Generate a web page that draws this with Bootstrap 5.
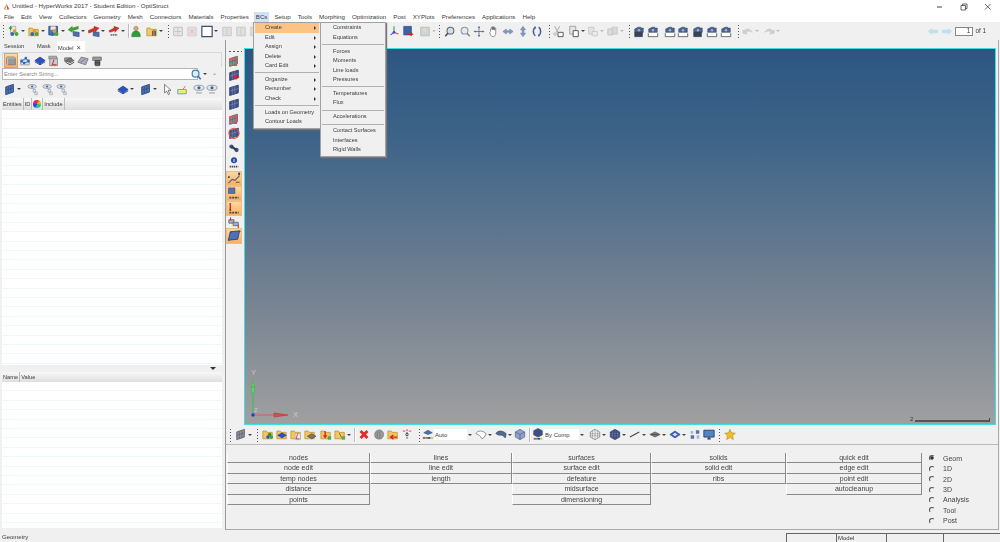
<!DOCTYPE html>
<html lang="en">
<head>
<meta charset="UTF-8">
<title>Untitled - HyperWorks 2017 - Student Edition - OptiStruct</title>
<link href="https://cdn.jsdelivr.net/npm/bootstrap@5.3.0/dist/css/bootstrap.min.css" rel="stylesheet">
<style>
  html, body { margin: 0; height: 542px; overflow: hidden; }
  body { font-family: "Liberation Sans", Arial, sans-serif; font-size: 6.3px; line-height: 1; color: #3a3a3a; background: #f0f0f0; }
  #app { width: 1000px; height: 542px; filter: blur(.3px); }

  /* title + menu */
  .ttlbar { height: 13px; background: #fff; font-size: 6.2px; padding-left: 3px; }
  .ttlbar .logo { width: 7px; height: 7px; margin-right: 2px; }
  .winbtn { width: 24px; text-align: center; }
  .winbtn svg { width: 8px; height: 8px; }
  .mnubar { height: 9px; background: #fff; gap: 7px; padding-left: 4px; font-size: 6.2px; }
  .mnubar span { white-space: nowrap; }
  .mnu-on { background: #cfe3f5; box-shadow: 0 0 0 2px #cfe3f5; }

  /* toolbars */
  .tbar1 { height: 18px; padding-left: 1px; }
  .ti { width: 12px; height: 13px; flex: none; overflow: visible; }
  .ca { width: 8px; flex: none; }
  .ca::before { content: ""; display: block; border: 2px solid transparent; border-top: 2.5px solid #444; border-bottom: 0; width: 0; margin-left: 1px; }
  .ca.c6 { width: 6px; }
  .ca.pale::before { border-top-color: #bbb; }
  .grp { width: 5px; height: 14px; flex: none; background: radial-gradient(circle, #555 .7px, transparent .9px) center top / 3px 3px repeat-y; }
  .sepv { width: 2px; height: 14px; flex: none; border-left: 1px solid #bbb; border-right: 1px solid #fff; }
  .l1 { margin-left: 1px; } .l2 { margin-left: 2px; } .l3 { margin-left: 3px; } .l4 { margin-left: 4px; } .l5 { margin-left: 5px; }
  .gap127 { margin-left: 127px; }
  .gap49 { margin-left: 49px; }
  .lneg8 { margin-left: -8px; }
  .pageinp { width: 18px; height: 9px; background: #fff; border: 1px solid #888; text-align: right; font-size: 6.5px; padding-right: 2px; margin-left: 2px; }
  .pageof { margin: 0 14px 0 2px; font-size: 6.3px; }

  /* left panel */
  .workrow { height: 490px; }
  .leftcol { width: 226px; flex: none; padding: 1px 0 0 2px; border-right: 1px solid #999; font-size: 5.7px; }
  .leftin { width: 220px; }
  .tabrow { height: 11px; }
  .tabcell { padding: 2.5px 0 0 2px; }
  .tabcell.t1 { width: 33px; } .tabcell.t2 { width: 22px; }
  .tabcell.on { width: 28px; background: #fff; padding-left: 1px; }
  .tabx { font-size: 7.5px; margin-left: 3px; }
  .iconrow { height: 15px; border: 1px solid #d9d9d9; border-bottom: 0; padding-left: 2px; gap: 2.4px; background: #f0f0f0; }
  .sel-org { background: linear-gradient(#ffd9a0, #fbb264); outline: 1px solid #e0a060; }
  .srch { height: 13px; padding-top: 1px; }
  .srchbox { width: 196px; height: 11.5px; border: 1px solid #b5b5b5; background: #fff; color: #8a8a8a; padding: 2.5px 0 0 1px; font-size: 5.7px; }
  .iconrow2 { height: 18px; padding-left: 2px; }
  .hdrrow { height: 12px; background: linear-gradient(#f8f8f8, #dedede); }
  .hdrrow span { padding: 0 1px; border-right: 1px solid #bbb; height: 12px; line-height: 12px; }
  .tblbody { background: repeating-linear-gradient(#fff 0, #fff 8.4px, #f0f7fa 8.4px, #f0f7fa 9.4px); }
  .tb-a { height: 255px; }
  .tb-b { height: 146px; }
  .splitr { height: 7px; }
  .splitr i { border: 3px solid transparent; border-top: 3.5px solid #333; border-bottom: 0; margin-right: 6px; }
  .hdr2 { height: 10px; }
  .hdr2 span { height: 10px; line-height: 10px; }
  .colorwheel { width: 8px; height: 8px; background: conic-gradient(#e22, #ec2, #2c3, #2bd, #23d, #c2c, #e22); margin: 2px 1px 0; }

  /* right */
  .rightcol { width: 773px; flex: none; border-right: 1px solid #aaa; }
  .viewrow { height: 385px; }
  .vtools { width: 18px; flex: none; padding-top: 10px; gap: 1.9px; }
  .grph { width: 14px; height: 3px; background: radial-gradient(circle, #555 .7px, transparent .9px) left center / 4px 3px repeat-x; }
  .vtools .ti { margin-left: 2px; width: 12px; height: 12.6px; }
  .vt-org { width: 14px; height: 13px; margin-left: 1px; background: linear-gradient(#ffd7a0, #f9b062); outline: 1px solid #e9c08c; flex: none; }
  .vt-org.first { margin-top: 1px; }
  .vt-org.last { height: 14px; margin-top: -2px; }
  .vt-org svg { width: 14px; height: 13px; display: block; }
  .viewport { width: 752px; margin-top: 7.5px; position: relative; border: 1px solid #3fdde6; background: linear-gradient(#2c5682, #3f6488 25%, #7d8793 72%, #a0a0a0); }
  .triad { position: absolute; left: 0; bottom: 0; width: 60px; height: 60px; }
  .scalebar { position: absolute; right: 5px; bottom: 2px; width: 80px; height: 4px; color: #333; font-size: 6px; }
  .scalebar b { flex: 1; height: 4px; border-bottom: 2px solid #555; border-right: 1px solid #444; margin-left: 2px; }

  .tbar2 { height: 20px; padding-left: 2px; border-bottom: 1px solid #bbb; }
  .cmbo { background: #fff; height: 11px; font-size: 6px; padding: 2.5px 0 0 1px; }
  .cmbo.w1 { width: 33px; } .cmbo.w2 { width: 35px; }

  .pagepanel { height: 85px; padding: 8px 0 0 1px; border-bottom: 1px solid #aaa; font-size: 7px; color: #444; }
  .pcol { flex: none; }
  .pc1 { width: 143px; } .pc2 { width: 142px; } .pc3 { width: 139px; } .pc4 { width: 135px; } .pc5 { width: 136px; }
  .btn.pbtn { display: block; width: 100%; height: 10.4px; padding: 0; border-radius: 0; border: 0; border-right: 1px solid #8a8a8a; border-bottom: 1px solid #8a8a8a; border-left: 1px solid #fff; background: #f0f0f0; font-size: 7px; line-height: 9.4px; color: #444; font-family: inherit; }
  .radios { padding-left: 7px; gap: 0; }
  .rdorow { height: 10.45px; gap: 8px; }
  .rdo { appearance: none; width: 6px; height: 6px; margin: 0; border-radius: 50%; border: 1px solid; border-color: #555 #eee #eee #555; background: #f0f0f0; }
  .rdo:checked { background: radial-gradient(circle, #333 1.5px, transparent 1.8px); }

  .statusbar { height: 12px; font-size: 6px; padding-left: 2px; }
  .stcell { height: 9px; margin-top: 3px; border-top: 1px solid #666; border-left: 1px solid #666; padding: 1px 0 0 1px; }
  .sw1 { width: 50px; } .sw2 { width: 50px; } .sw3 { width: 57px; } .sw4 { width: 57px; }

  /* BCs menus */
  .hwmenu { position: absolute; top: 22px; z-index: 5; background: #f0f0f0; border: 1px solid #a0a0a0; box-shadow: 1px 1px 1px #777; padding: .4px 1px; }
  .hwmenu.m-a { left: 253px; width: 68px; height: 107px; }
  .hwmenu.m-b { left: 320px; width: 66px; height: 135px; z-index: 6; }
  .hwitem { height: 9.4px; line-height: 9.4px; padding-left: 10px; position: relative; font-size: 5.6px; white-space: nowrap; }
  .m-b .hwitem { padding-left: 11px; }
  .hwitem.on { background: #fbc384; }
  .hwitem.sub::after { content: ""; position: absolute; right: 3px; top: 3px; border: 2px solid transparent; border-left: 2.5px solid #333; border-right: 0; }
  .hwsep { height: 4.6px; padding-top: 2px; }
  .hwsep::before { content: ""; display: block; border-top: 1px solid #b0b0b0; }
</style>
</head>
<body>
<!-- icon sheet -->
<svg width="0" height="0" class="position-absolute">
  <defs>
    <symbol id="plate" viewBox="0 0 14 14"><path d="M2 4 11 1v9l-9 3z" fill="#4f74b8" stroke="#2b4378"/><path d="M5 3v9M8 2v9M2 8l9-3" stroke="#27396a" stroke-width=".6"/></symbol>
    <symbol id="plateg" viewBox="0 0 14 14"><path d="M2 4 11 1v9l-9 3z" fill="#8b8fa3" stroke="#666"/><path d="M5 3v9M8 2v9M2 8l9-3" stroke="#555" stroke-width=".6"/></symbol>
    <symbol id="plated" viewBox="0 0 14 14"><path d="M2 4 12 1v9L2 13z" fill="#3d4f92" stroke="#2a3670"/><path d="M5 3v9M8 2v9M2 8l10-3" stroke="#9aa" stroke-width=".5"/></symbol>
    <symbol id="folder" viewBox="0 0 14 14"><path d="M1 3h4l1 1.500h6V12H1z" fill="#f4c65f" stroke="#b98a2a" stroke-width=".8"/></symbol>
    <symbol id="balls" viewBox="0 0 14 14"><circle cx="5" cy="10" r="2.300" fill="#2d6bc4"/><circle cx="10" cy="10" r="2.300" fill="#46a83c"/><circle cx="7.500" cy="6.500" r="2.200" fill="#e29a2e"/></symbol>
    <symbol id="diam" viewBox="0 0 14 14"><path d="M1 7 7 3l6 4-6 4z" fill="#2a52c8" stroke="#1a307c" stroke-width=".7"/><path d="M1 8.500 7 12l6-3.500" fill="none" stroke="#1a307c"/></symbol>
    <symbol id="new" viewBox="0 0 14 14"><path d="M3 1h6v8H3z" fill="#eee" stroke="#888" stroke-width=".7"/><path d="M1 3h4M3 1v4" stroke="#2a9a2a" stroke-width="1.400"/><use href="#balls"/></symbol>
    <symbol id="open" viewBox="0 0 14 14"><use href="#folder"/><use href="#balls"/></symbol>
    <symbol id="save" viewBox="0 0 14 14"><path d="M1 1h10v10H1z" fill="#5a76b0" stroke="#2d4272"/><path d="M3 1h6v4H3z" fill="#e8e8e8"/><use href="#balls"/></symbol>
    <symbol id="imp" viewBox="0 0 14 14"><path d="M6 7 13 8v5L6 12z" fill="#4f6db0" stroke="#2b4378" stroke-width=".6"/><path d="M12 1 5 3V1L0 5l5 3V6l7-2z" fill="#3fa52f" stroke="#27701e" stroke-width=".4"/></symbol>
    <symbol id="exp" viewBox="0 0 14 14"><path d="M6 7 13 8v5L6 12z" fill="#4f6db0" stroke="#2b4378" stroke-width=".6"/><path d="M0 6 7 3V1l6 2-5 5V6L1 9z" fill="#d4302a" stroke="#8c1c18" stroke-width=".4"/></symbol>
    <symbol id="ppt" viewBox="0 0 14 14"><path d="M1 6 7 3V1l6 2-5 5V6L2 8z" fill="#d4302a" stroke="#8c1c18" stroke-width=".4"/><path d="M3 11h8" stroke="#777" stroke-width="2" stroke-dasharray="2 .6"/></symbol>
    <symbol id="person" viewBox="0 0 14 14"><circle cx="7" cy="3.500" r="2.500" fill="#d9a878" stroke="#7a5a3a" stroke-width=".5"/><path d="M2 13c0-5 2-6.500 5-6.500s5 1.500 5 6.500z" fill="#2f9e3a" stroke="#1c6824" stroke-width=".5"/></symbol>
    <symbol id="foldc" viewBox="0 0 14 14"><use href="#folder"/><path d="M7 12V6h1.500v6z" fill="#d33"/><path d="M8.500 12V5H10v7z" fill="#3a3"/><path d="M10 12V6h1.500v6z" fill="#33c"/><path d="M11.500 12V7H13v5z" fill="#cc3"/></symbol>
    <symbol id="ghost1" viewBox="0 0 14 14"><path d="M2 2h10v10H2z" fill="#e6e6e6" stroke="#bbb"/><path d="M7 3v8M3 7h8" stroke="#c4c4c4"/></symbol>
    <symbol id="ghost2" viewBox="0 0 14 14"><path d="M2 2h10v10H2z" fill="#e8e0e0" stroke="#ccc"/><path d="M4 4l6 6M10 4l-6 6" stroke="#d8b0b0"/></symbol>
    <symbol id="whitebox" viewBox="0 0 14 14"><path d="M1 1h12v12H1z" fill="#fff" stroke="#3f4f6a" stroke-width="1.400"/></symbol>
    <symbol id="ghost3" viewBox="0 0 14 14"><path d="M2 2h10v10H2z" fill="#dfdfdf" stroke="#c6c6c6"/><path d="M7 2v10" stroke="#c8c8c8"/></symbol>
    <symbol id="xyz" viewBox="0 0 14 14"><path d="M7 8V1" stroke="#2a9a3a" stroke-width="1.200"/><path d="M7 8l5 2" stroke="#d33" stroke-width="1.200"/><path d="M7 8l-4 3" stroke="#2b4bd0" stroke-width="1.200"/><circle cx="7" cy="8" r="1.500" fill="#2b4bd0"/></symbol>
    <symbol id="vbook" viewBox="0 0 14 14"><path d="M2 1h9v10H2z" fill="#3c62a8" stroke="#24406f" stroke-width=".7"/><path d="M6 10h6l-2-2m2 2-2 2" stroke="#d52020" stroke-width="1.400" fill="none"/></symbol>
    <symbol id="ghperson" viewBox="0 0 14 14"><path d="M2 2h10v10H2z" fill="#cfd6cf" stroke="#bbb"/><circle cx="7" cy="5.500" r="2.200" fill="#e6d5c4"/></symbol>
    <symbol id="zoomf" viewBox="0 0 14 14"><circle cx="7.500" cy="6" r="4" fill="#d7dde4" stroke="#5d6774" stroke-width="1.200"/><path d="M4.500 9 1.500 12.500" stroke="#3d4754" stroke-width="1.600"/></symbol>
    <symbol id="zoomg" viewBox="0 0 14 14"><circle cx="6.500" cy="6" r="4" fill="#e5e8ec" stroke="#8c96a2" stroke-width="1.200"/><path d="M9.500 9 12.500 12.500" stroke="#79838f" stroke-width="1.600"/></symbol>
    <symbol id="zoomb" viewBox="0 0 14 14"><circle cx="6.500" cy="6" r="4" fill="#dcecf8" stroke="#3f7fb8" stroke-width="1.400"/><path d="M9.500 9 12.500 12.500" stroke="#4a6a8a" stroke-width="1.800"/></symbol>
    <symbol id="pan" viewBox="0 0 14 14"><path d="M7 1v12M1 7h12" stroke="#5b6d84" stroke-width="1"/><path d="M7 1 5.500 3h3zM7 13l-1.500-2h3zM1 7l2-1.500v3zM13 7l-2-1.500v3z" fill="#5b6d84"/></symbol>
    <symbol id="hand" viewBox="0 0 14 14"><path d="M3 7V4l1 .2V2h1.200v3-3.500h1.300V5V2h1.200v3.500V3h1.300v6c0 2.500-1.500 4-3.500 4S3 11 2 8.500z" fill="#fff" stroke="#555" stroke-width=".7"/></symbol>
    <symbol id="lr" viewBox="0 0 14 14"><path d="M1 7l4-3v2h4V4l4 3-4 3V8H5v2z" fill="#8296c2" stroke="#5a6c96" stroke-width=".5"/></symbol>
    <symbol id="ud" viewBox="0 0 14 14"><path d="M7 1l3 4H8v4h2l-3 4-3-4h2V5H4z" fill="#8296c2" stroke="#5a6c96" stroke-width=".5"/></symbol>
    <symbol id="spin" viewBox="0 0 14 14"><path d="M5 2C2 4 2 10 5 12M9 2c3 2 3 8 0 10" fill="none" stroke="#44608f" stroke-width="1.800"/><path d="M5 1v3M9 10v3" stroke="#44608f"/></symbol>
    <symbol id="cut" viewBox="0 0 14 14"><path d="M3 1l4 7M9 1 5 8" stroke="#b0b0b0" stroke-width="1.200"/><circle cx="3.500" cy="10" r="1.500" fill="none" stroke="#b0b0b0"/><path d="M7 8h6v5H7z" fill="#fff" stroke="#444"/></symbol>
    <symbol id="paste" viewBox="0 0 14 14"><path d="M2 1h7v9H2z" fill="#e6e6e6" stroke="#999"/><path d="M6 6h6v7H6z" fill="#fff" stroke="#444"/></symbol>
    <symbol id="ghdoc" viewBox="0 0 14 14"><path d="M2 2h6v8H2z" fill="#e4e4e4" stroke="#c3c3c3"/><path d="M6 7h6v5H6z" fill="#ececec" stroke="#c3c3c3"/></symbol>
    <symbol id="ghdoc2" viewBox="0 0 14 14"><path d="M1 4h6v7H1z" fill="#ddd" stroke="#bfbfbf"/><path d="M6 2h6v8H6z" fill="#d8d8d8" stroke="#c6c6c6"/></symbol>
    <symbol id="cam" viewBox="0 0 14 14"><path d="M2 4l4-2h3v1h3v5H2z" fill="#4c658f" stroke="#2d4064" stroke-width=".6"/><circle cx="7" cy="5.500" r="1.400" fill="#9fb4d4"/><path d="M1.500 9v4h11V9" fill="#fff" stroke="#333" stroke-width=".8"/></symbol>
    <symbol id="camf" viewBox="0 0 14 14"><path d="M2 4l4-2h3v1h3v5H2z" fill="#4c658f" stroke="#2d4064" stroke-width=".6"/><circle cx="7" cy="5.500" r="1.400" fill="#9fb4d4"/><path d="M2 8h9v5H2z" fill="#34445e" stroke="#222" stroke-width=".6"/></symbol>
    <symbol id="undo" viewBox="0 0 14 14"><path d="M2 7c2-4 7-4 10 1-3-2-5-2-7 0l1 2-5-1 0-4z" fill="#cfcfcf" stroke="#bdbdbd" stroke-width=".5"/></symbol>
    <symbol id="redo" viewBox="0 0 14 14"><path d="M12 7C10 3 5 3 2 8c3-2 5-2 7 0l-1 2 5-1 0-4z" fill="#cfcfcf" stroke="#bdbdbd" stroke-width=".5"/></symbol>
    <symbol id="back" viewBox="0 0 14 14"><path d="M1 7l5-4v2h7v4H6v2z" fill="#bfe0ee"/></symbol>
    <symbol id="fwd" viewBox="0 0 14 14"><path d="M13 7 8 3v2H1v4h7v2z" fill="#bfe0ee"/></symbol>
    <symbol id="net" viewBox="0 0 14 14"><path d="M2 6h10v6H2z" fill="#ddd" stroke="#999"/><path d="M3 8 8 4l3 4-5 2z" fill="none" stroke="#2b66c4"/><circle cx="3" cy="8" r="1.500" fill="#2b66c4"/><circle cx="8" cy="4" r="1.500" fill="#2b66c4"/><circle cx="11" cy="8" r="1.500" fill="#2b66c4"/><circle cx="6" cy="10" r="1.500" fill="#2b66c4"/></symbol>
    <symbol id="loadc" viewBox="0 0 14 14"><path d="M2 4h9v9H2z" fill="#ccc" stroke="#888"/><path d="M1 2h9v3H1z" fill="#aaa" stroke="#888"/><path d="M7 6l-2 6h5" fill="none" stroke="#c33" stroke-width="1.200"/></symbol>
    <symbol id="printr" viewBox="0 0 14 14"><path d="M2 4h8v4H2z" fill="#aaa" stroke="#666"/><path d="M3 7l5-3 5 3-5 3z" fill="#777" stroke="#444" stroke-width=".6"/><path d="M3 9l5 3 5-3" stroke="#333" fill="none"/></symbol>
    <symbol id="surf" viewBox="0 0 14 14"><path d="M1 9 5 3l8 2-3 7z" fill="#a8adc4" stroke="#777"/><path d="M4 9l6-4" stroke="#777"/></symbol>
    <symbol id="stack" viewBox="0 0 14 14"><path d="M2 3h10v4H2z" fill="#999" stroke="#777"/><path d="M5 7h5v6H5z" fill="#777" stroke="#444"/><path d="M4 9h7M4 11h7" stroke="#333"/></symbol>
    <symbol id="eyep" viewBox="0 0 14 14"><ellipse cx="6" cy="3.500" rx="5" ry="2.300" fill="#dbe3ee" stroke="#6b7c94" stroke-width=".7"/><circle cx="6" cy="3.500" r="1.300" fill="#4a607e"/><path d="M7 7h3v3H7zM9 10h3v3H9z" fill="#e6e9ef" stroke="#7e8b9c" stroke-width=".6"/></symbol>
    <symbol id="cursr" viewBox="0 0 14 14"><path d="M3 1v10l2.500-2 2 4 1.500-1-2-4h3.500z" fill="#fff" stroke="#333" stroke-width=".7"/></symbol>
    <symbol id="ybox" viewBox="0 0 14 14"><path d="M2 7h10v5H2z" fill="#ecec70" stroke="#4ca5c4"/><path d="M8 7l3-4" stroke="#d0602a"/></symbol>
    <symbol id="eye" viewBox="0 0 14 14"><ellipse cx="7" cy="5" rx="6" ry="3" fill="#e1e7ef" stroke="#6b7c94" stroke-width=".8"/><circle cx="7" cy="5" r="1.800" fill="#4a607e"/><path d="M4 11h6" stroke="#555" stroke-dasharray="1.500 .8"/></symbol>
    <symbol id="redp" viewBox="0 0 14 14"><use href="#plateg"/><path d="M2 4h8v8H2z" fill="none" stroke="#e2553f" stroke-width="1.200"/></symbol>
    <symbol id="redarr" viewBox="0 0 14 14"><use href="#plated"/><path d="M13 9H8m2-2.500L7 9l3 2.500" fill="none" stroke="#d22" stroke-width="1.800"/></symbol>
    <symbol id="nocirc" viewBox="0 0 14 14"><use href="#plated"/><circle cx="7" cy="7" r="6" fill="none" stroke="#e2553f" stroke-width="1.200"/></symbol>
    <symbol id="binoc" viewBox="0 0 14 14"><circle cx="4" cy="5" r="2.500" fill="#42587e"/><circle cx="10" cy="9" r="2.500" fill="#42587e"/><path d="M4 5l6 4" stroke="#2d3b58" stroke-width="2.500"/></symbol>
    <symbol id="info" viewBox="0 0 14 14"><circle cx="7" cy="4.500" r="3.500" fill="#2947a8"/><path d="M7 3.200v3.600" stroke="#fff"/><path d="M2 12h10" stroke="#444" stroke-width="2" stroke-dasharray="1.600 .8"/></symbol>
    <symbol id="chart" viewBox="0 0 14 14"><path d="M1 12l4-4 3 1 5-5" fill="none" stroke="#565b72" stroke-width="1.200"/><path d="M1 5h1v1H1zM12 1h1v2h-1zM9 11h4" stroke="#444"/></symbol>
    <symbol id="abc1" viewBox="0 0 14 14"><path d="M1 1h7v6H1z" fill="#5870a8" stroke="#354877" stroke-width=".6"/><path d="M2 11.500h10" stroke="#4a4a4a" stroke-width="2" stroke-dasharray="2.200 .8"/></symbol>
    <symbol id="abc2" viewBox="0 0 14 14"><path d="M3 1v7" stroke="#c22" stroke-width="1.400"/><circle cx="3" cy="8.500" r="1" fill="#333"/><path d="M2 11.500h10" stroke="#4a4a4a" stroke-width="2" stroke-dasharray="2.200 .8"/></symbol>
    <symbol id="rearr" viewBox="0 0 14 14"><path d="M1 4h6v4H1z" fill="#a6add0" stroke="#667"/><path d="M6 7h6v4H6z" fill="#a6add0" stroke="#667"/><path d="M3 1v4M12 10v4" stroke="#d22" stroke-width="1.200"/></symbol>
    <symbol id="surfo" viewBox="0 0 14 14"><path d="M1 12 3 3l10-1-2 9z" fill="#4c71b6" stroke="#2c4678"/><path d="M1 12h1v1H1zM3 3h1v1H3zM13 2h1v1h-1z" fill="#333"/></symbol>
    <symbol id="fballs" viewBox="0 0 14 14"><use href="#folder"/><circle cx="7" cy="10" r="2" fill="#2b4bd0"/><circle cx="11" cy="10" r="2" fill="#3a3"/><circle cx="9" cy="7" r="2" fill="#2d8a3a"/></symbol>
    <symbol id="fdiam" viewBox="0 0 14 14"><use href="#folder"/><path d="M2 8l5-3 5 3-5 3z" fill="#2a52c8" stroke="#1a307c" stroke-width=".6"/></symbol>
    <symbol id="fload" viewBox="0 0 14 14"><use href="#folder"/><path d="M6 6h6v7H6z" fill="#eee" stroke="#999" stroke-width=".6"/><path d="M9 6l-2 6h4" fill="none" stroke="#c33"/></symbol>
    <symbol id="fprint" viewBox="0 0 14 14"><use href="#folder"/><path d="M4 9l5-3 5 3-5 3z" fill="#777" stroke="#333" stroke-width=".6"/></symbol>
    <symbol id="fdown" viewBox="0 0 14 14"><use href="#folder"/><path d="M6 3v6" stroke="#d22" stroke-width="1.600"/><path d="M3.500 8h5L6 12z" fill="#d22"/><path d="M9 9h4v4H9z" fill="#4a4"/></symbol>
    <symbol id="fnode" viewBox="0 0 14 14"><use href="#folder"/><path d="M6 5l3 6" stroke="#666"/><path d="M9 9h4v4H9z" fill="#6a4"/></symbol>
    <symbol id="redx" viewBox="0 0 14 14"><path d="M3 3l8 8M11 3l-8 8" stroke="#df2a2a" stroke-width="3.400"/></symbol>
    <symbol id="blob" viewBox="0 0 14 14"><path d="M2 7c0-4 4-6 7-5s4 4 3 7-4 4-7 3-3-3-3-5z" fill="#9a9a9a" stroke="#666" stroke-width=".7"/><path d="M5 4v7M8 3v8" stroke="#666" stroke-width=".6"/></symbol>
    <symbol id="farr" viewBox="0 0 14 14"><use href="#folder"/><path d="M12 10H5m2.500-2.500L4 10l3.500 2.500" fill="none" stroke="#d22" stroke-width="1.500"/></symbol>
    <symbol id="tree" viewBox="0 0 14 14"><path d="M7 1v12" stroke="#444" stroke-dasharray="2 1"/><path d="M5 3H2M9 3h3" stroke="#d33"/><circle cx="7" cy="7" r="1.500" fill="none" stroke="#444"/></symbol>
    <symbol id="paint" viewBox="0 0 14 14"><path d="M2 5l5-3 5 3-5 2z" fill="#4f6f9f" stroke="#2b4378" stroke-width=".6"/><path d="M1 10h3v2H1z" fill="#d33"/><path d="M4 10h3v2H4z" fill="#3a3"/><path d="M7 10h3v2H7z" fill="#33c"/><path d="M10 10h3v2h-3z" fill="#cc3"/></symbol>
    <symbol id="cloud" viewBox="0 0 14 14"><path d="M1 6c2-4 8-4 12 0l-2 4-3 2c-1-3-4-5-7-6z" fill="#fff" stroke="#666" stroke-width=".8"/></symbol>
    <symbol id="cloudb" viewBox="0 0 14 14"><path d="M1 6c2-4 8-4 12 0l-1 5c-2-3-5-4-7-3z" fill="#55688d" stroke="#34456a" stroke-width=".8"/></symbol>
    <symbol id="bcube" viewBox="0 0 14 14"><path d="M7 1l5.500 3v6L7 13l-5.500-3V4z" fill="#8fa2cc" stroke="#45567e" stroke-width=".7"/><path d="M1.500 4 7 7l5.500-3M7 7v6" stroke="#45567e" stroke-width=".7" fill="none"/></symbol>
    <symbol id="ccube" viewBox="0 0 14 14"><path d="M7 0l5 2.500v5L7 10 2 7.500v-5z" fill="#3e5082" stroke="#26335a" stroke-width=".6"/><path d="M2 11h2.500v2H2z" fill="#d33"/><path d="M4.500 11H7v2H4.500z" fill="#3a3"/><path d="M7 11h2.500v2H7z" fill="#33c"/><path d="M9.500 11H12v2H9.500z" fill="#cc3"/></symbol>
    <symbol id="wire" viewBox="0 0 14 14"><path d="M7 1l5.500 3v6L7 13l-5.500-3V4z" fill="#eee" stroke="#666" stroke-width=".7"/><path d="M4 2.500v9M7 1v12M10 2.500v9M1.500 6h11M1.500 8.500h11" stroke="#777" stroke-width=".5"/></symbol>
    <symbol id="mesh3" viewBox="0 0 14 14"><path d="M7 1l5.500 3v6L7 13l-5.500-3V4z" fill="#39487c" stroke="#232e58" stroke-width=".7"/><path d="M4 2.500v9M7 1v12M10 2.500v9M1.500 6h11M1.500 8.500h11" stroke="#8f9ac0" stroke-width=".4"/></symbol>
    <symbol id="line1" viewBox="0 0 14 14"><path d="M1 10 12 4" stroke="#444" stroke-width="1.200"/></symbol>
    <symbol id="gdiam" viewBox="0 0 14 14"><path d="M1 7l6-3 6 3-6 3z" fill="#777" stroke="#444" stroke-width=".7"/><path d="M3 7h8" stroke="#333" stroke-width=".6"/></symbol>
    <symbol id="wdiam" viewBox="0 0 14 14"><path d="M1 7l6-4 6 4-6 4z" fill="#3a63c6" stroke="#22357c" stroke-width=".7"/><path d="M4 7l3-2 3 2-3 2z" fill="#dde"/></symbol>
    <symbol id="squares" viewBox="0 0 14 14"><path d="M8 2h4v4H8zM2 8h4v4H2z" fill="#5872a8"/><path d="M2 3h3v3H2zM9 8h3v4H9z" fill="#a8b4d0"/></symbol>
    <symbol id="monitor" viewBox="0 0 14 14"><path d="M1 2h12v8H1z" fill="#4a86c8" stroke="#335"/><path d="M5 12h4M7 10v2" stroke="#335" stroke-width="1.400"/></symbol>
    <symbol id="star" viewBox="0 0 14 14"><path d="M7 1l1.900 4 4.300.5-3.200 3 .9 4.300L7 10.600l-3.900 2.200.9-4.300-3.200-3L5.100 5z" fill="#f0c020" stroke="#a57d10" stroke-width=".6"/></symbol>
    <symbol id="gcube" viewBox="0 0 14 14"><path d="M2 3h9l1 1v8H3l-1-1z" fill="#9a9a9a" stroke="#777"/><path d="M2 3l1 1h9M3 4v8" stroke="#ccc" fill="none"/></symbol>
  </defs>
</svg>

<div id="app" class="d-flex flex-column">
  <!-- title -->
  <div class="ttlbar d-flex align-items-center">
    <svg class="logo" viewBox="0 0 10 10"><path d="M5 1 1 9h2l2-4z" fill="#e8a040"/><path d="M5 1l4 8H6z" fill="#d24a3a"/><path d="M2 9h7" stroke="#aaa"/></svg>
    <span>Untitled - HyperWorks 2017 - Student Edition - OptiStruct</span>
    <div class="ms-auto d-flex align-items-center">
      <span class="winbtn"><svg viewBox="0 0 8 8"><path d="M1 4h5" stroke="#444"/></svg></span>
      <span class="winbtn"><svg viewBox="0 0 8 8"><path d="M1 2.500h4.500V7H1zM2.500 2.500V1H7v4.500H5.500" fill="none" stroke="#444" stroke-width=".8"/></svg></span>
      <span class="winbtn"><svg viewBox="0 0 8 8"><path d="M1 1l5.500 5.500M6.500 1 1 6.500" stroke="#444" stroke-width=".8"/></svg></span>
    </div>
  </div>

  <!-- menu bar -->
  <div class="mnubar d-flex align-items-center">
    <span>File</span><span>Edit</span><span>View</span><span>Collectors</span><span>Geometry</span><span>Mesh</span><span>Connectors</span><span>Materials</span><span>Properties</span><span class="mnu-on">BCs</span><span>Setup</span><span>Tools</span><span>Morphing</span><span>Optimization</span><span>Post</span><span>XYPlots</span><span>Preferences</span><span>Applications</span><span>Help</span>
  </div>

  <!-- main toolbar -->
  <div class="tbar1 d-flex align-items-center">
    <i class="grp"></i>
    <svg class="ti l2"><use href="#new"/></svg><i class="ca"></i>
    <svg class="ti"><use href="#open"/></svg><i class="ca"></i>
    <svg class="ti"><use href="#save"/></svg><i class="ca"></i>
    <svg class="ti"><use href="#imp"/></svg><i class="ca"></i>
    <svg class="ti"><use href="#exp"/></svg><i class="ca"></i>
    <svg class="ti"><use href="#ppt"/></svg><i class="ca"></i>
    <i class="sepv"></i>
    <svg class="ti"><use href="#person"/></svg>
    <svg class="ti l4"><use href="#foldc"/></svg><i class="ca"></i>
    <i class="grp"></i>
    <svg class="ti l1"><use href="#ghost1"/></svg>
    <svg class="ti l2"><use href="#ghost2"/></svg>
    <svg class="ti l3"><use href="#whitebox"/></svg><i class="ca"></i>
    <svg class="ti"><use href="#ghost3"/></svg>
    <svg class="ti l2"><use href="#ghost3"/></svg>
    <svg class="ti l2"><use href="#ghost3"/></svg>
    <svg class="ti gap127"><use href="#xyz"/></svg>
    <svg class="ti l2"><use href="#vbook"/></svg>
    <svg class="ti l5"><use href="#ghperson"/></svg><i class="ca c6 pale"></i>
    <i class="grp"></i>
    <svg class="ti l2"><use href="#zoomf"/></svg>
    <svg class="ti l3"><use href="#zoomg"/></svg>
    <svg class="ti l2"><use href="#pan"/></svg>
    <svg class="ti l3"><use href="#hand"/></svg>
    <svg class="ti l2"><use href="#lr"/></svg>
    <svg class="ti l3"><use href="#ud"/></svg>
    <svg class="ti l2"><use href="#spin"/></svg>
    <i class="grp l4"></i>
    <svg class="ti"><use href="#cut"/></svg>
    <svg class="ti l4"><use href="#paste"/></svg><i class="ca c6"></i>
    <svg class="ti l1"><use href="#ghdoc"/></svg><i class="ca c6 pale"></i>
    <svg class="ti l2"><use href="#ghdoc2"/></svg><i class="ca c6 pale"></i>
    <i class="grp l2"></i>
    <svg class="ti l1"><use href="#camf"/></svg>
    <svg class="ti l2"><use href="#cam"/></svg>
    <svg class="ti l5"><use href="#cam"/></svg>
    <svg class="ti l1"><use href="#cam"/></svg>
    <svg class="ti l3"><use href="#camf"/></svg>
    <svg class="ti l2"><use href="#cam"/></svg>
    <svg class="ti l2"><use href="#cam"/></svg>
    <i class="grp l4"></i>
    <svg class="ti l1"><use href="#undo"/></svg><i class="ca c6 pale"></i>
    <svg class="ti l3"><use href="#redo"/></svg><i class="ca c6 pale"></i>
    <svg class="ti ms-auto"><use href="#back"/></svg>
    <svg class="ti l2"><use href="#fwd"/></svg>
    <div class="pageinp">1</div><div class="pageof">of 1</div>
  </div>

  <div class="workrow d-flex">
    <!-- left panel -->
    <div class="leftcol">
      <div class="leftin d-flex flex-column">
        <div class="tabrow d-flex">
          <div class="tabcell t1">Session</div><div class="tabcell t2">Mask</div>
          <div class="tabcell on">Model<span class="tabx">×</span></div>
        </div>
        <div class="iconrow d-flex align-items-center">
          <svg class="ti sel-org"><use href="#gcube"/></svg>
          <svg class="ti"><use href="#net"/></svg>
          <svg class="ti"><use href="#diam"/></svg>
          <svg class="ti"><use href="#loadc"/></svg>
          <svg class="ti"><use href="#printr"/></svg>
          <svg class="ti"><use href="#surf"/></svg>
          <svg class="ti"><use href="#stack"/></svg>
        </div>
        <div class="srch d-flex align-items-center">
          <div class="srchbox">Enter Search String...</div>
          <svg class="ti lneg8"><use href="#zoomb"/></svg><i class="ca c6"></i>
          <span class="ms-1 text-secondary">⌄</span>
        </div>
        <div class="iconrow2 d-flex align-items-center">
          <svg class="ti"><use href="#plate"/></svg><i class="ca"></i>
          <svg class="ti l3"><use href="#eyep"/></svg>
          <svg class="ti l3"><use href="#eyep"/></svg>
          <svg class="ti l2"><use href="#eyep"/></svg>
          <svg class="ti gap49"><use href="#diam"/></svg><i class="ca"></i>
          <svg class="ti l3"><use href="#plate"/></svg><i class="ca"></i>
          <svg class="ti l2"><use href="#cursr"/></svg>
          <svg class="ti l2"><use href="#ybox"/></svg>
          <svg class="ti l5"><use href="#eye"/></svg>
          <svg class="ti l1"><use href="#eye"/></svg>
        </div>
        <div class="hdrrow d-flex">
          <span>Entities</span><span>ID</span><span class="d-flex p-0"><i class="colorwheel rounded-circle"></i></span><span>Include</span>
        </div>
        <div class="tblbody tb-a"></div>
        <div class="splitr d-flex justify-content-end align-items-center"><i></i></div>
        <div class="hdrrow hdr2 d-flex"><span>Name</span><span class="border-0">Value</span></div>
        <div class="tblbody tb-b"></div>
      </div>
    </div>

    <!-- right side -->
    <div class="rightcol d-flex flex-column">
      <div class="viewrow d-flex">
        <div class="vtools d-flex flex-column">
          <i class="grph l2"></i>
          <svg class="ti"><use href="#redp"/></svg>
          <svg class="ti"><use href="#redarr"/></svg>
          <svg class="ti"><use href="#plated"/></svg>
          <svg class="ti"><use href="#plated"/></svg>
          <svg class="ti"><use href="#redp"/></svg>
          <svg class="ti"><use href="#nocirc"/></svg>
          <svg class="ti"><use href="#binoc"/></svg>
          <svg class="ti"><use href="#info"/></svg>
          <div class="vt-org first"><svg><use href="#chart"/></svg></div>
          <div class="vt-org"><svg><use href="#abc1"/></svg></div>
          <div class="vt-org"><svg><use href="#abc2"/></svg></div>
          <svg class="ti"><use href="#rearr"/></svg>
          <div class="vt-org last"><svg><use href="#surfo"/></svg></div>
        </div>
        <div class="viewport">
          <svg class="triad" viewBox="0 0 60 60">
            <text x="6" y="11" font-size="7.500" fill="#c4c8cc" font-family="Liberation Sans">Y</text>
            <path d="M8 51V20" stroke="#2ec24a"/><path d="M6.500 29h3v-6h-3zM8 17l-2 6h4z" fill="#7fbf7f" stroke="#2ec24a" stroke-width=".7"/>
            <path d="M8 51h30" stroke="#d85a5a"/><path d="M29 49v4l14-2z" fill="#b85a5a" stroke="#c33" stroke-width=".7"/>
            <circle cx="8" cy="51" r="1.800" fill="#2a3ce0"/>
            <text x="9" y="48" font-size="6" fill="#c8c8c8" font-family="Liberation Sans">Z</text>
            <text x="48" y="53" font-size="7.500" fill="#c8ccd0" font-family="Liberation Sans">X</text>
          </svg>
          <div class="scalebar d-flex align-items-end"><span>2</span><b></b></div>
        </div>
      </div>

      <!-- bottom toolbar -->
      <div class="tbar2 d-flex align-items-center">
        <i class="grp"></i>
        <svg class="ti l2"><use href="#plateg"/></svg><i class="ca"></i>
        <i class="grp"></i>
        <svg class="ti l2"><use href="#fballs"/></svg>
        <svg class="ti l2"><use href="#fdiam"/></svg>
        <svg class="ti l2"><use href="#fload"/></svg>
        <svg class="ti l2"><use href="#fprint"/></svg>
        <svg class="ti l4"><use href="#fdown"/></svg>
        <svg class="ti l2"><use href="#fnode"/></svg><i class="ca c6"></i>
        <i class="sepv l2"></i>
        <svg class="ti l2"><use href="#redx"/></svg>
        <svg class="ti l3"><use href="#blob"/></svg>
        <svg class="ti l2"><use href="#farr"/></svg>
        <svg class="ti l2"><use href="#tree"/></svg>
        <i class="grp l4"></i>
        <svg class="ti"><use href="#paint"/></svg>
        <div class="cmbo w1">Auto</div>
        <i class="ca c6"></i>
        <svg class="ti l2"><use href="#cloud"/></svg><i class="ca c6"></i>
        <svg class="ti l2"><use href="#cloudb"/></svg><i class="ca c6"></i>
        <svg class="ti l1"><use href="#bcube"/></svg>
        <i class="sepv l3"></i>
        <svg class="ti l1"><use href="#ccube"/></svg>
        <div class="cmbo w2">By Comp</div>
        <i class="ca c6"></i>
        <svg class="ti l4"><use href="#wire"/></svg><i class="ca"></i>
        <svg class="ti"><use href="#mesh3"/></svg><i class="ca"></i>
        <svg class="ti"><use href="#line1"/></svg><i class="ca"></i>
        <svg class="ti"><use href="#gdiam"/></svg><i class="ca"></i>
        <svg class="ti"><use href="#wdiam"/></svg><i class="ca"></i>
        <svg class="ti"><use href="#squares"/></svg>
        <svg class="ti l2"><use href="#monitor"/></svg>
        <i class="grp l2"></i>
        <svg class="ti l2"><use href="#star"/></svg>
      </div>

      <!-- page panel -->
      <div class="pagepanel d-flex">
        <div class="pcol pc1"><button class="btn pbtn">nodes</button><button class="btn pbtn">node edit</button><button class="btn pbtn">temp nodes</button><button class="btn pbtn">distance</button><button class="btn pbtn">points</button></div>
        <div class="pcol pc2"><button class="btn pbtn">lines</button><button class="btn pbtn">line edit</button><button class="btn pbtn">length</button></div>
        <div class="pcol pc3"><button class="btn pbtn">surfaces</button><button class="btn pbtn">surface edit</button><button class="btn pbtn">defeature</button><button class="btn pbtn">midsurface</button><button class="btn pbtn">dimensioning</button></div>
        <div class="pcol pc4"><button class="btn pbtn">solids</button><button class="btn pbtn">solid edit</button><button class="btn pbtn">ribs</button></div>
        <div class="pcol pc5"><button class="btn pbtn">quick edit</button><button class="btn pbtn">edge edit</button><button class="btn pbtn">point edit</button><button class="btn pbtn">autocleanup</button></div>
        <div class="radios d-flex flex-column">
          <label class="rdorow d-flex align-items-center"><input class="rdo" type="radio" name="pg" checked>Geom</label>
          <label class="rdorow d-flex align-items-center"><input class="rdo" type="radio" name="pg">1D</label>
          <label class="rdorow d-flex align-items-center"><input class="rdo" type="radio" name="pg">2D</label>
          <label class="rdorow d-flex align-items-center"><input class="rdo" type="radio" name="pg">3D</label>
          <label class="rdorow d-flex align-items-center"><input class="rdo" type="radio" name="pg">Analysis</label>
          <label class="rdorow d-flex align-items-center"><input class="rdo" type="radio" name="pg">Tool</label>
          <label class="rdorow d-flex align-items-center"><input class="rdo" type="radio" name="pg">Post</label>
        </div>
      </div>
    </div>
  </div>

  <!-- status -->
  <div class="statusbar d-flex">
    <span class="mt-1">Geometry</span>
    <div class="ms-auto d-flex">
      <div class="stcell sw1"></div><div class="stcell sw2">Model</div><div class="stcell sw3"></div><div class="stcell sw4"></div>
    </div>
  </div>
</div>

<!-- BCs menu, open -->
<div class="hwmenu m-a">
  <div class="hwitem sub on">Create</div>
  <div class="hwitem sub">Edit</div>
  <div class="hwitem sub">Assign</div>
  <div class="hwitem sub">Delete</div>
  <div class="hwitem sub">Card Edit</div>
  <div class="hwsep"></div>
  <div class="hwitem sub">Organize</div>
  <div class="hwitem sub">Renumber</div>
  <div class="hwitem sub">Check</div>
  <div class="hwsep"></div>
  <div class="hwitem">Loads on Geometry</div>
  <div class="hwitem">Contour Loads</div>
</div>
<div class="hwmenu m-b">
  <div class="hwitem">Constraints</div>
  <div class="hwitem">Equations</div>
  <div class="hwsep"></div>
  <div class="hwitem">Forces</div>
  <div class="hwitem">Moments</div>
  <div class="hwitem">Line loads</div>
  <div class="hwitem">Pressures</div>
  <div class="hwsep"></div>
  <div class="hwitem">Temperatures</div>
  <div class="hwitem">Flux</div>
  <div class="hwsep"></div>
  <div class="hwitem">Accelerations</div>
  <div class="hwsep"></div>
  <div class="hwitem">Contact Surfaces</div>
  <div class="hwitem">Interfaces</div>
  <div class="hwitem">Rigid Walls</div>
</div>
<script src="https://cdn.jsdelivr.net/npm/bootstrap@5.3.0/dist/js/bootstrap.bundle.min.js"></script>
</body>
</html>
